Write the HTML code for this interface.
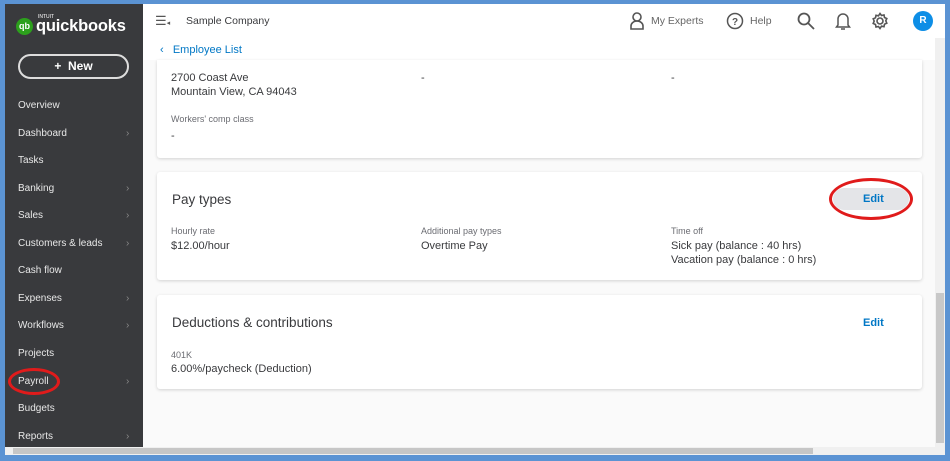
<!DOCTYPE html>
<html><head><style>
*{box-sizing:border-box;margin:0;padding:0}
body{width:950px;height:461px;overflow:hidden;background:#5b93d3;font-family:"Liberation Sans",sans-serif;position:relative}
.frame{position:absolute;left:5px;top:4px;width:940px;height:451px;background:#fff;overflow:hidden}
.side{position:absolute;left:0;top:0;width:138px;height:443px;background:#393a3d;color:#e6e6e6}
.logo{position:absolute;left:11px;top:13px;display:flex;align-items:center}
.logo .c{width:17px;height:17px;border-radius:50%;background:#2ca01c;color:#fff;font-size:9px;font-weight:bold;text-align:center;line-height:17px}
.logo .t{color:#fff;font-size:16.5px;font-weight:bold;margin-left:3px;letter-spacing:-.2px}
.logo small{position:absolute;left:22px;top:-3px;font-size:5px;color:#fff}
.new{position:absolute;left:13px;top:50px;width:111px;height:25px;border:2px solid #ddd;border-radius:13px;color:#fff;font-size:12px;font-weight:bold;text-align:center;line-height:21px}
.it{position:absolute;left:13px;font-size:10px;color:#e8e8e8}
.ar{position:absolute;left:121px;font-size:10px;color:#888}
.top{position:absolute;left:138px;top:0;right:0;height:34px;background:#fff}
.main{position:absolute;left:138px;top:56px;right:10px;bottom:8px;background:#fafafa}
.card{position:absolute;left:14px;width:765px;background:#fff;border-radius:3px;box-shadow:0 1px 3px rgba(0,0,0,.16)}
.lb{position:absolute;font-size:9px;color:#6b6c72}
.vl{position:absolute;font-size:11px;color:#393a3d;line-height:14px}
.h{position:absolute;left:15px;font-size:13.5px;color:#393a3d}
.edit{position:absolute;color:#0077c5;font-size:11px;font-weight:bold}
</style></head><body>
<div class="frame">
 <div class="side">
  <div class="logo"><div class="c">qb</div><small>INTUIT</small><div class="t">quickbooks</div></div>
  <div class="new">+&nbsp; New</div>
  <div class="it" style="top:96px">Overview</div>
  <div class="it" style="top:124px">Dashboard</div><div class="ar" style="top:124px">›</div>
  <div class="it" style="top:151px">Tasks</div>
  <div class="it" style="top:179px">Banking</div><div class="ar" style="top:179px">›</div>
  <div class="it" style="top:206px">Sales</div><div class="ar" style="top:206px">›</div>
  <div class="it" style="top:234px">Customers &amp; leads</div><div class="ar" style="top:234px">›</div>
  <div class="it" style="top:261px">Cash flow</div>
  <div class="it" style="top:289px">Expenses</div><div class="ar" style="top:289px">›</div>
  <div class="it" style="top:316px">Workflows</div><div class="ar" style="top:316px">›</div>
  <div class="it" style="top:344px">Projects</div>
  <div class="it" style="top:372px">Payroll</div><div class="ar" style="top:372px">›</div>
  <div class="it" style="top:399px">Budgets</div>
  <div class="it" style="top:427px">Reports</div><div class="ar" style="top:427px">›</div>
  <div style="position:absolute;left:3px;top:364px;width:52px;height:27px;border:3px solid #e01b1b;border-radius:50%"></div>
 </div>
 <div class="top">
  <div style="position:absolute;left:12px;top:9px;font-size:13px;color:#555">☰<span style="font-size:7px">◂</span></div>
  <div style="position:absolute;left:43px;top:11px;font-size:10.5px;color:#393a3d">Sample Company</div>
  <svg style="position:absolute;left:486px;top:8px" width="16" height="18" viewBox="0 0 16 18" fill="none" stroke="#555" stroke-width="1.6"><circle cx="8" cy="5" r="4"/><path d="M2 17v-3a6 5 0 0 1 12 0v3z"/></svg>
  <div style="position:absolute;left:508px;top:11px;font-size:10.5px;color:#666">My Experts</div>
  <svg style="position:absolute;left:583px;top:8px" width="18" height="18" viewBox="0 0 18 18" fill="none" stroke="#555" stroke-width="1.5"><circle cx="9" cy="9" r="7.5"/><text x="9" y="13" font-size="10" text-anchor="middle" fill="#555" stroke="none" font-family="Liberation Sans" font-weight="bold">?</text></svg>
  <div style="position:absolute;left:607px;top:11px;font-size:10.5px;color:#666">Help</div>
  <svg style="position:absolute;left:654px;top:8px" width="18" height="18" viewBox="0 0 18 18" fill="none" stroke="#555" stroke-width="1.8"><circle cx="7" cy="7" r="5.5"/><path d="M11 11l6 6"/></svg>
  <svg style="position:absolute;left:692px;top:7px" width="16" height="20" viewBox="0 0 16 20" fill="none" stroke="#555" stroke-width="1.5"><path d="M3 14V8a5 5 0 0 1 10 0v6l1.5 2h-13z"/><path d="M6 18h4"/></svg>
  <svg style="position:absolute;left:728px;top:8px" width="18" height="18" viewBox="0 0 18 18" fill="none" stroke="#555" stroke-width="1.6"><circle cx="9" cy="9" r="3"/><path d="M9 1.5l1.5 2 2.5-.5.5 2.5 2.3 1-1 2.3 1 2.4-2.3 1-.5 2.5-2.5-.5L9 16.5l-1.5-2-2.5.5-.5-2.5-2.3-1 1-2.4-1-2.3 2.3-1 .5-2.5 2.5.5z"/></svg>
  <div style="position:absolute;left:770px;top:7px;width:20px;height:20px;border-radius:50%;background:#0d8ee6;color:#fff;font-size:10px;font-weight:bold;text-align:center;line-height:20px">R</div>
 </div>
 <div style="position:absolute;left:155px;top:40px;font-size:11px;color:#0077c5">‹ &nbsp;&nbsp;Employee List</div>
 <div class="main">
  <div class="card" style="top:0;height:98px;border-radius:0 0 3px 3px">
   <div class="vl" style="left:14px;top:11px">2700 Coast Ave<br>Mountain View, CA 94043</div>
   <div class="vl" style="left:264px;top:11px">-</div>
   <div class="vl" style="left:514px;top:11px">-</div>
   <div class="lb" style="left:14px;top:54px">Workers' comp class</div>
   <div class="vl" style="left:14px;top:69px">-</div>
  </div>
  <div class="card" style="top:112px;height:108px">
   <div class="h" style="top:20px">Pay types</div>
   <div style="position:absolute;left:676px;top:16px;width:76px;height:22px;background:#e4e5e8;border-radius:11px"></div>
   <div class="edit" style="left:706px;top:21px">Edit</div>
   <div style="position:absolute;left:672px;top:6px;width:84px;height:42px;border:3px solid #e01b1b;border-radius:50%"></div>
   <div class="lb" style="left:14px;top:54px">Hourly rate</div>
   <div class="vl" style="left:14px;top:67px">$12.00/hour</div>
   <div class="lb" style="left:264px;top:54px">Additional pay types</div>
   <div class="vl" style="left:264px;top:67px">Overtime Pay</div>
   <div class="lb" style="left:514px;top:54px">Time off</div>
   <div class="vl" style="left:514px;top:67px">Sick pay (balance : 40 hrs)<br>Vacation pay (balance : 0 hrs)</div>
  </div>
  <div class="card" style="top:235px;height:94px">
   <div class="h" style="top:20px">Deductions &amp; contributions</div>
   <div class="edit" style="left:706px;top:22px">Edit</div>
   <div class="lb" style="left:14px;top:55px">401K</div>
   <div class="vl" style="left:14px;top:67px">6.00%/paycheck (Deduction)</div>
  </div>
 </div>
 <div style="position:absolute;right:0;top:34px;width:10px;height:409px;background:#f0f0f0"><div style="position:absolute;left:1px;top:255px;width:8px;height:150px;background:#c8c8c8"></div></div>
 <div style="position:absolute;left:0;bottom:0;width:940px;height:8px;background:#f0f0f0"><div style="position:absolute;left:8px;top:1px;width:800px;height:6px;background:#c6c6c6"></div></div>
</div>
</body></html>
